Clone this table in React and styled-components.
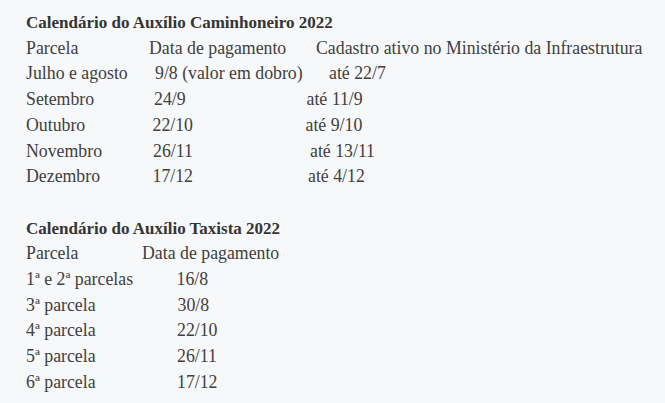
import React from "react";
import styled, { createGlobalStyle } from "styled-components";

const Global = createGlobalStyle`
  html, body { margin: 0; padding: 0; background: #f7f8fa; }
  body { font-family: "Liberation Serif", "DejaVu Serif", serif; }
`;

const Page = styled.div`
  padding: 10px 0 0 26px;
  color: #404040;
  font-size: 17.8px;
  line-height: 25.7px;
`;

const Section = styled.section`
  & + & { margin-top: 25.7px; }
`;

const Title = styled.div`
  font-weight: 700;
  font-size: 17px;
  color: #353535;
`;

const Row = styled.div`
  display: grid;
  grid-template-columns: ${(p) => p.$cols};
  white-space: nowrap;
`;

const Cell = styled.span``;

const camin = [
  { cells: ["Parcela", "Data de pagamento", "Cadastro ativo no Ministério da Infraestrutura"], x: [123, 290] },
  { cells: ["Julho e agosto", "9/8 (valor em dobro)", "até 22/7"], x: [129, 303] },
  { cells: ["Setembro", "24/9", "até 11/9"], x: [128, 280.5] },
  { cells: ["Outubro", "22/10", "até 9/10"], x: [126.5, 279.5] },
  { cells: ["Novembro", "26/11", "até 13/11"], x: [127, 284] },
  { cells: ["Dezembro", "17/12", "até 4/12"], x: [126.5, 282] },
];

const taxi = [
  { cells: ["Parcela", "Data de pagamento"], x: [116] },
  { cells: ["1ª e 2ª parcelas", "16/8"], x: [150.5] },
  { cells: ["3ª parcela", "30/8"], x: [151.5] },
  { cells: ["4ª parcela", "22/10"], x: [151] },
  { cells: ["5ª parcela", "26/11"], x: [151] },
  { cells: ["6ª parcela", "17/12"], x: [151] },
];

const colsOf = (x) => {
  const parts = [];
  let prev = 0;
  x.forEach((v) => {
    parts.push(`${v - prev}px`);
    prev = v;
  });
  parts.push("auto");
  return parts.join(" ");
};

const Table = ({ rows }) =>
  rows.map((r, i) => (
    <Row key={i} $cols={colsOf(r.x)}>
      {r.cells.map((c, j) => (
        <Cell key={j}>{c}</Cell>
      ))}
    </Row>
  ));

export default function App() {
  return (
    <>
      <Global />
      <Page>
        <Section>
          <Title>Calendário do Auxílio Caminhoneiro 2022</Title>
          <Table rows={camin} />
        </Section>
        <Section>
          <Title>Calendário do Auxílio Taxista 2022</Title>
          <Table rows={taxi} />
        </Section>
      </Page>
    </>
  );
}
